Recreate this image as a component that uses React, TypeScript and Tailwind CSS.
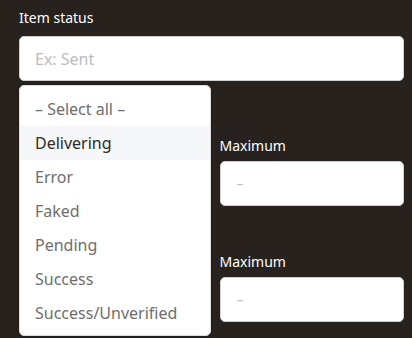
import React from "react";

const items = ["Delivering", "Error", "Faked", "Pending", "Success", "Success/Unverified"];

function Field({ label }: { label: string }) {
  return (
    <div className="flex flex-col">
      <div className="text-[14px] leading-[20px] text-white">{label}</div>
      <div className="mt-[5px] flex h-[45px] items-center rounded-[5px] border border-[#cfcfcf] bg-white px-[16px] text-[14px] text-[#c4c4c4]">
        –
      </div>
    </div>
  );
}

function Hidden() {
  return (
    <div className="flex flex-col">
      <div className="h-[20px]" />
      <div className="mt-[5px] h-[45px] rounded-[5px] bg-white" />
    </div>
  );
}

export default function App() {
  return (
    <div className="relative min-h-[338px] w-full bg-[#28221f] pl-[19px] pr-[8px] pt-[8px] font-['Segoe_UI','Noto_Sans',sans-serif]">
      <div className="text-[14px] leading-[20px] text-white">Item status</div>
      <div className="mt-[8px] flex h-[45px] items-center rounded-[5px] border border-[#d0d0d0] bg-white px-[15px] text-[16px] text-[#bdbdbd]">
        Ex: Sent
      </div>
      <div className="mt-[55px] grid grid-cols-2 gap-x-4 gap-y-[46px]">
        <Hidden />
        <Field label="Maximum" />
        <Hidden />
        <Field label="Maximum" />
      </div>

      <div className="absolute left-[19px] top-[85px] w-[192px] rounded-[5px] border border-[#dcdcdc] bg-white pb-[5px] pt-[6px] shadow-sm">
        <div className="flex h-[34px] items-center px-[15px] text-[16px] text-[#6e6e6e]">– Select all –</div>
        {items.map((it) => (
          <div
            key={it}
            className={
              it === "Delivering"
                ? "flex h-[34px] items-center bg-[#f6f7f9] px-[15px] text-[16px] text-[#2b2b2b]"
                : "flex h-[34px] items-center px-[15px] text-[16px] text-[#6e6e6e]"
            }
          >
            {it}
          </div>
        ))}
      </div>
    </div>
  );
}
